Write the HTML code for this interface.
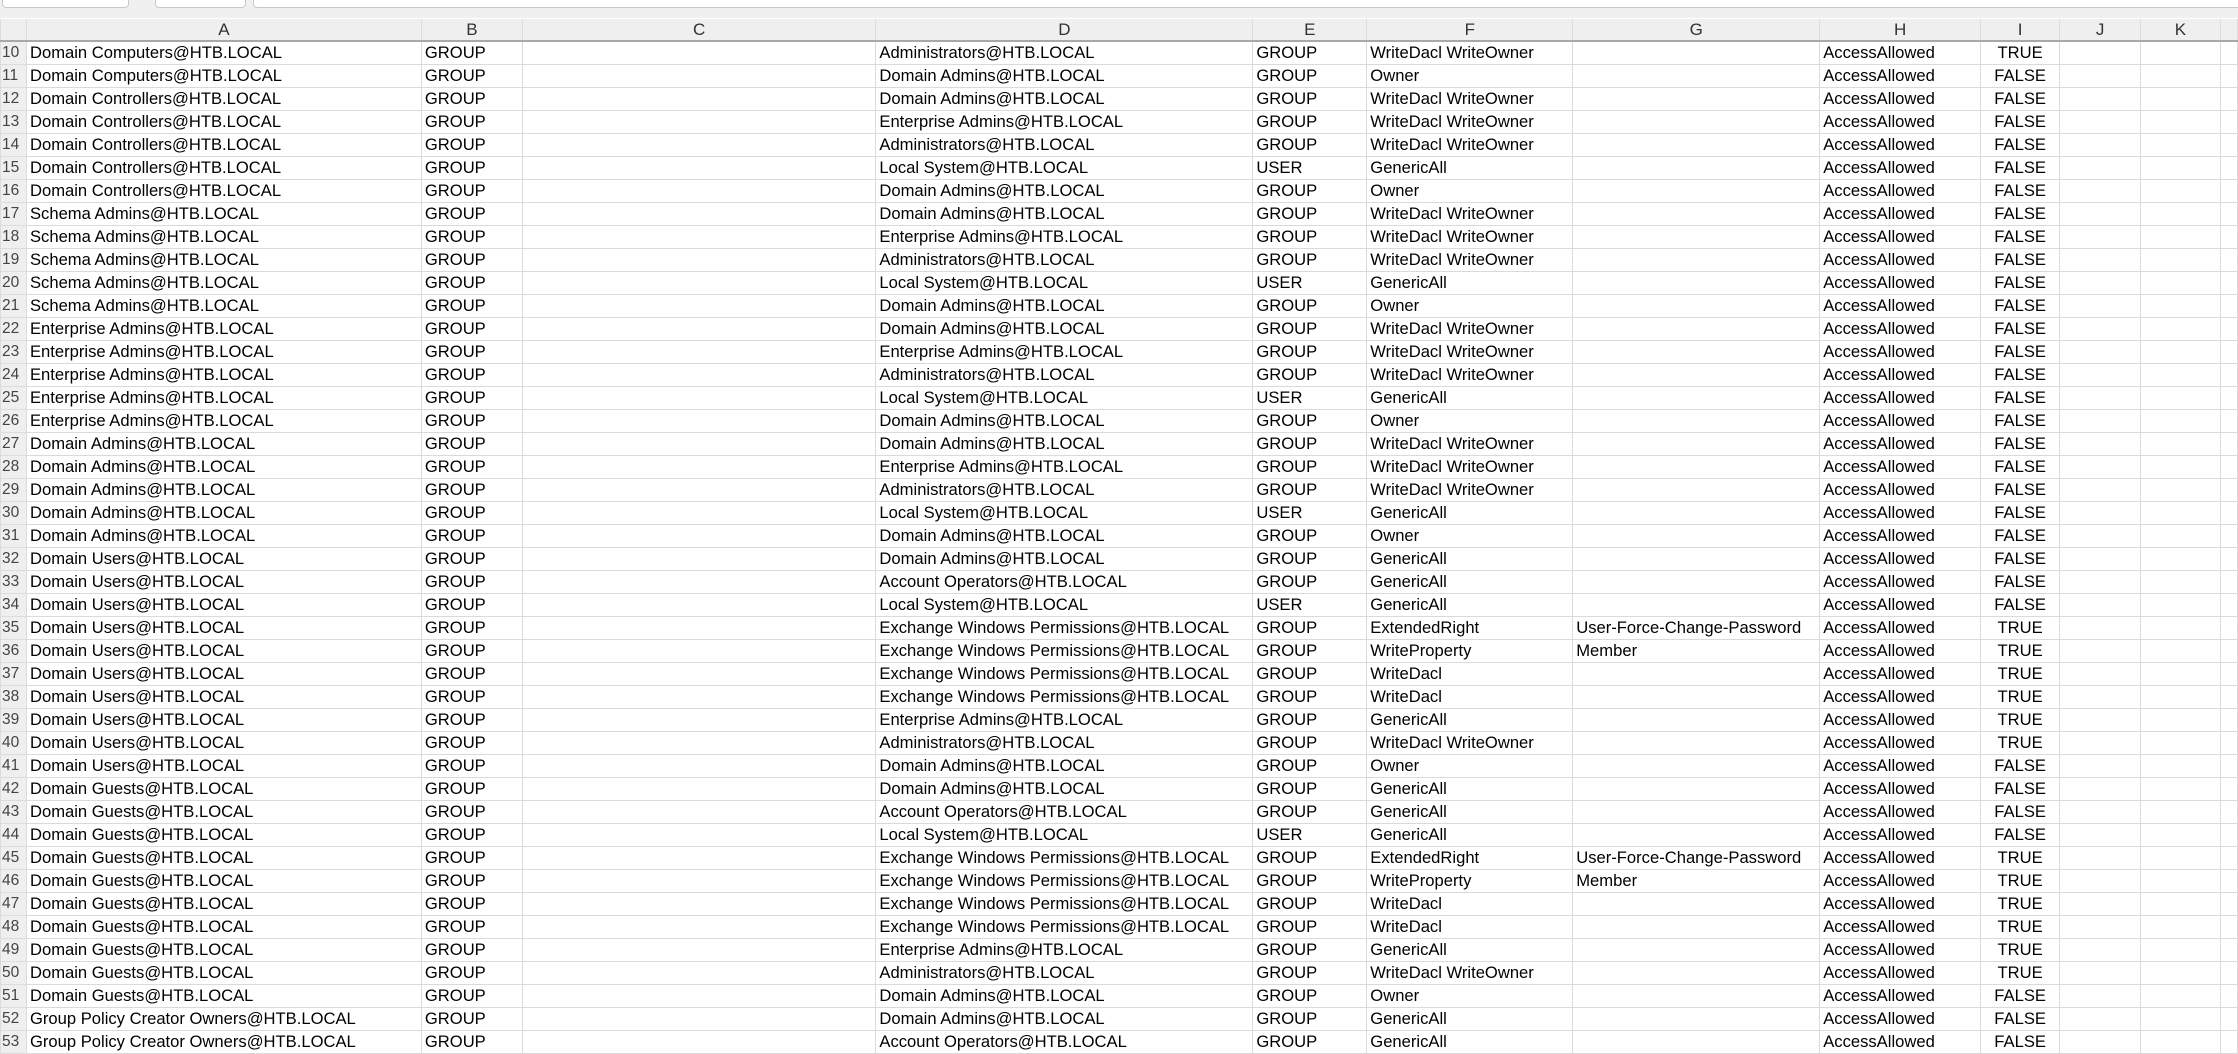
<!DOCTYPE html>
<html><head><meta charset="utf-8"><style>
*{margin:0;padding:0;box-sizing:border-box}
body{width:2238px;height:1049px;overflow:hidden;background:#fff;font-family:"Liberation Sans",sans-serif;color:#000}
#top{position:absolute;left:0;top:0;width:2238px;height:18px;background:#f0f0f0}
.box{position:absolute;top:-6px;height:14px;background:#fff;border:1px solid #c8c8c8;border-radius:4px}
table{position:absolute;left:0;top:19px;border-collapse:collapse;table-layout:fixed}
td{height:23px;border:1px solid #dadada;font-size:16.6px;white-space:nowrap;overflow:hidden;padding:0 3px;line-height:21px}
tr.h td{height:21px;background:#efefef;text-align:center;color:#333;border-color:#dcdcdc;border-bottom:2px solid #a8a8a8;border-top:none;font-size:17px}
td.n{background:#efefef;color:#444;padding:0 1px;text-align:left;font-size:15.5px;border-color:#dcdcdc}
td.c{text-align:center}
</style></head><body>
<div id="top"><div class="box" style="left:2px;width:127px"></div><div class="box" style="left:155px;width:91px"></div><div class="box" style="left:253px;width:1990px"></div></div>
<table>
<colgroup><col style="width:26px"><col style="width:395px"><col style="width:101px"><col style="width:354px"><col style="width:377px"><col style="width:114px"><col style="width:206px"><col style="width:247px"><col style="width:161px"><col style="width:79px"><col style="width:81px"><col style="width:80px"><col style="width:17px"></colgroup>
<tr class="h"><td class="n" style="border-bottom:2px solid #a8a8a8"></td><td>A</td><td>B</td><td>C</td><td>D</td><td>E</td><td>F</td><td>G</td><td>H</td><td>I</td><td>J</td><td>K</td><td></td></tr>
<tr><td class="n">10</td><td>Domain Computers@HTB.LOCAL</td><td>GROUP</td><td></td><td>Administrators@HTB.LOCAL</td><td>GROUP</td><td>WriteDacl WriteOwner</td><td></td><td>AccessAllowed</td><td class="c">TRUE</td><td></td><td></td><td></td></tr>
<tr><td class="n">11</td><td>Domain Computers@HTB.LOCAL</td><td>GROUP</td><td></td><td>Domain Admins@HTB.LOCAL</td><td>GROUP</td><td>Owner</td><td></td><td>AccessAllowed</td><td class="c">FALSE</td><td></td><td></td><td></td></tr>
<tr><td class="n">12</td><td>Domain Controllers@HTB.LOCAL</td><td>GROUP</td><td></td><td>Domain Admins@HTB.LOCAL</td><td>GROUP</td><td>WriteDacl WriteOwner</td><td></td><td>AccessAllowed</td><td class="c">FALSE</td><td></td><td></td><td></td></tr>
<tr><td class="n">13</td><td>Domain Controllers@HTB.LOCAL</td><td>GROUP</td><td></td><td>Enterprise Admins@HTB.LOCAL</td><td>GROUP</td><td>WriteDacl WriteOwner</td><td></td><td>AccessAllowed</td><td class="c">FALSE</td><td></td><td></td><td></td></tr>
<tr><td class="n">14</td><td>Domain Controllers@HTB.LOCAL</td><td>GROUP</td><td></td><td>Administrators@HTB.LOCAL</td><td>GROUP</td><td>WriteDacl WriteOwner</td><td></td><td>AccessAllowed</td><td class="c">FALSE</td><td></td><td></td><td></td></tr>
<tr><td class="n">15</td><td>Domain Controllers@HTB.LOCAL</td><td>GROUP</td><td></td><td>Local System@HTB.LOCAL</td><td>USER</td><td>GenericAll</td><td></td><td>AccessAllowed</td><td class="c">FALSE</td><td></td><td></td><td></td></tr>
<tr><td class="n">16</td><td>Domain Controllers@HTB.LOCAL</td><td>GROUP</td><td></td><td>Domain Admins@HTB.LOCAL</td><td>GROUP</td><td>Owner</td><td></td><td>AccessAllowed</td><td class="c">FALSE</td><td></td><td></td><td></td></tr>
<tr><td class="n">17</td><td>Schema Admins@HTB.LOCAL</td><td>GROUP</td><td></td><td>Domain Admins@HTB.LOCAL</td><td>GROUP</td><td>WriteDacl WriteOwner</td><td></td><td>AccessAllowed</td><td class="c">FALSE</td><td></td><td></td><td></td></tr>
<tr><td class="n">18</td><td>Schema Admins@HTB.LOCAL</td><td>GROUP</td><td></td><td>Enterprise Admins@HTB.LOCAL</td><td>GROUP</td><td>WriteDacl WriteOwner</td><td></td><td>AccessAllowed</td><td class="c">FALSE</td><td></td><td></td><td></td></tr>
<tr><td class="n">19</td><td>Schema Admins@HTB.LOCAL</td><td>GROUP</td><td></td><td>Administrators@HTB.LOCAL</td><td>GROUP</td><td>WriteDacl WriteOwner</td><td></td><td>AccessAllowed</td><td class="c">FALSE</td><td></td><td></td><td></td></tr>
<tr><td class="n">20</td><td>Schema Admins@HTB.LOCAL</td><td>GROUP</td><td></td><td>Local System@HTB.LOCAL</td><td>USER</td><td>GenericAll</td><td></td><td>AccessAllowed</td><td class="c">FALSE</td><td></td><td></td><td></td></tr>
<tr><td class="n">21</td><td>Schema Admins@HTB.LOCAL</td><td>GROUP</td><td></td><td>Domain Admins@HTB.LOCAL</td><td>GROUP</td><td>Owner</td><td></td><td>AccessAllowed</td><td class="c">FALSE</td><td></td><td></td><td></td></tr>
<tr><td class="n">22</td><td>Enterprise Admins@HTB.LOCAL</td><td>GROUP</td><td></td><td>Domain Admins@HTB.LOCAL</td><td>GROUP</td><td>WriteDacl WriteOwner</td><td></td><td>AccessAllowed</td><td class="c">FALSE</td><td></td><td></td><td></td></tr>
<tr><td class="n">23</td><td>Enterprise Admins@HTB.LOCAL</td><td>GROUP</td><td></td><td>Enterprise Admins@HTB.LOCAL</td><td>GROUP</td><td>WriteDacl WriteOwner</td><td></td><td>AccessAllowed</td><td class="c">FALSE</td><td></td><td></td><td></td></tr>
<tr><td class="n">24</td><td>Enterprise Admins@HTB.LOCAL</td><td>GROUP</td><td></td><td>Administrators@HTB.LOCAL</td><td>GROUP</td><td>WriteDacl WriteOwner</td><td></td><td>AccessAllowed</td><td class="c">FALSE</td><td></td><td></td><td></td></tr>
<tr><td class="n">25</td><td>Enterprise Admins@HTB.LOCAL</td><td>GROUP</td><td></td><td>Local System@HTB.LOCAL</td><td>USER</td><td>GenericAll</td><td></td><td>AccessAllowed</td><td class="c">FALSE</td><td></td><td></td><td></td></tr>
<tr><td class="n">26</td><td>Enterprise Admins@HTB.LOCAL</td><td>GROUP</td><td></td><td>Domain Admins@HTB.LOCAL</td><td>GROUP</td><td>Owner</td><td></td><td>AccessAllowed</td><td class="c">FALSE</td><td></td><td></td><td></td></tr>
<tr><td class="n">27</td><td>Domain Admins@HTB.LOCAL</td><td>GROUP</td><td></td><td>Domain Admins@HTB.LOCAL</td><td>GROUP</td><td>WriteDacl WriteOwner</td><td></td><td>AccessAllowed</td><td class="c">FALSE</td><td></td><td></td><td></td></tr>
<tr><td class="n">28</td><td>Domain Admins@HTB.LOCAL</td><td>GROUP</td><td></td><td>Enterprise Admins@HTB.LOCAL</td><td>GROUP</td><td>WriteDacl WriteOwner</td><td></td><td>AccessAllowed</td><td class="c">FALSE</td><td></td><td></td><td></td></tr>
<tr><td class="n">29</td><td>Domain Admins@HTB.LOCAL</td><td>GROUP</td><td></td><td>Administrators@HTB.LOCAL</td><td>GROUP</td><td>WriteDacl WriteOwner</td><td></td><td>AccessAllowed</td><td class="c">FALSE</td><td></td><td></td><td></td></tr>
<tr><td class="n">30</td><td>Domain Admins@HTB.LOCAL</td><td>GROUP</td><td></td><td>Local System@HTB.LOCAL</td><td>USER</td><td>GenericAll</td><td></td><td>AccessAllowed</td><td class="c">FALSE</td><td></td><td></td><td></td></tr>
<tr><td class="n">31</td><td>Domain Admins@HTB.LOCAL</td><td>GROUP</td><td></td><td>Domain Admins@HTB.LOCAL</td><td>GROUP</td><td>Owner</td><td></td><td>AccessAllowed</td><td class="c">FALSE</td><td></td><td></td><td></td></tr>
<tr><td class="n">32</td><td>Domain Users@HTB.LOCAL</td><td>GROUP</td><td></td><td>Domain Admins@HTB.LOCAL</td><td>GROUP</td><td>GenericAll</td><td></td><td>AccessAllowed</td><td class="c">FALSE</td><td></td><td></td><td></td></tr>
<tr><td class="n">33</td><td>Domain Users@HTB.LOCAL</td><td>GROUP</td><td></td><td>Account Operators@HTB.LOCAL</td><td>GROUP</td><td>GenericAll</td><td></td><td>AccessAllowed</td><td class="c">FALSE</td><td></td><td></td><td></td></tr>
<tr><td class="n">34</td><td>Domain Users@HTB.LOCAL</td><td>GROUP</td><td></td><td>Local System@HTB.LOCAL</td><td>USER</td><td>GenericAll</td><td></td><td>AccessAllowed</td><td class="c">FALSE</td><td></td><td></td><td></td></tr>
<tr><td class="n">35</td><td>Domain Users@HTB.LOCAL</td><td>GROUP</td><td></td><td>Exchange Windows Permissions@HTB.LOCAL</td><td>GROUP</td><td>ExtendedRight</td><td>User-Force-Change-Password</td><td>AccessAllowed</td><td class="c">TRUE</td><td></td><td></td><td></td></tr>
<tr><td class="n">36</td><td>Domain Users@HTB.LOCAL</td><td>GROUP</td><td></td><td>Exchange Windows Permissions@HTB.LOCAL</td><td>GROUP</td><td>WriteProperty</td><td>Member</td><td>AccessAllowed</td><td class="c">TRUE</td><td></td><td></td><td></td></tr>
<tr><td class="n">37</td><td>Domain Users@HTB.LOCAL</td><td>GROUP</td><td></td><td>Exchange Windows Permissions@HTB.LOCAL</td><td>GROUP</td><td>WriteDacl</td><td></td><td>AccessAllowed</td><td class="c">TRUE</td><td></td><td></td><td></td></tr>
<tr><td class="n">38</td><td>Domain Users@HTB.LOCAL</td><td>GROUP</td><td></td><td>Exchange Windows Permissions@HTB.LOCAL</td><td>GROUP</td><td>WriteDacl</td><td></td><td>AccessAllowed</td><td class="c">TRUE</td><td></td><td></td><td></td></tr>
<tr><td class="n">39</td><td>Domain Users@HTB.LOCAL</td><td>GROUP</td><td></td><td>Enterprise Admins@HTB.LOCAL</td><td>GROUP</td><td>GenericAll</td><td></td><td>AccessAllowed</td><td class="c">TRUE</td><td></td><td></td><td></td></tr>
<tr><td class="n">40</td><td>Domain Users@HTB.LOCAL</td><td>GROUP</td><td></td><td>Administrators@HTB.LOCAL</td><td>GROUP</td><td>WriteDacl WriteOwner</td><td></td><td>AccessAllowed</td><td class="c">TRUE</td><td></td><td></td><td></td></tr>
<tr><td class="n">41</td><td>Domain Users@HTB.LOCAL</td><td>GROUP</td><td></td><td>Domain Admins@HTB.LOCAL</td><td>GROUP</td><td>Owner</td><td></td><td>AccessAllowed</td><td class="c">FALSE</td><td></td><td></td><td></td></tr>
<tr><td class="n">42</td><td>Domain Guests@HTB.LOCAL</td><td>GROUP</td><td></td><td>Domain Admins@HTB.LOCAL</td><td>GROUP</td><td>GenericAll</td><td></td><td>AccessAllowed</td><td class="c">FALSE</td><td></td><td></td><td></td></tr>
<tr><td class="n">43</td><td>Domain Guests@HTB.LOCAL</td><td>GROUP</td><td></td><td>Account Operators@HTB.LOCAL</td><td>GROUP</td><td>GenericAll</td><td></td><td>AccessAllowed</td><td class="c">FALSE</td><td></td><td></td><td></td></tr>
<tr><td class="n">44</td><td>Domain Guests@HTB.LOCAL</td><td>GROUP</td><td></td><td>Local System@HTB.LOCAL</td><td>USER</td><td>GenericAll</td><td></td><td>AccessAllowed</td><td class="c">FALSE</td><td></td><td></td><td></td></tr>
<tr><td class="n">45</td><td>Domain Guests@HTB.LOCAL</td><td>GROUP</td><td></td><td>Exchange Windows Permissions@HTB.LOCAL</td><td>GROUP</td><td>ExtendedRight</td><td>User-Force-Change-Password</td><td>AccessAllowed</td><td class="c">TRUE</td><td></td><td></td><td></td></tr>
<tr><td class="n">46</td><td>Domain Guests@HTB.LOCAL</td><td>GROUP</td><td></td><td>Exchange Windows Permissions@HTB.LOCAL</td><td>GROUP</td><td>WriteProperty</td><td>Member</td><td>AccessAllowed</td><td class="c">TRUE</td><td></td><td></td><td></td></tr>
<tr><td class="n">47</td><td>Domain Guests@HTB.LOCAL</td><td>GROUP</td><td></td><td>Exchange Windows Permissions@HTB.LOCAL</td><td>GROUP</td><td>WriteDacl</td><td></td><td>AccessAllowed</td><td class="c">TRUE</td><td></td><td></td><td></td></tr>
<tr><td class="n">48</td><td>Domain Guests@HTB.LOCAL</td><td>GROUP</td><td></td><td>Exchange Windows Permissions@HTB.LOCAL</td><td>GROUP</td><td>WriteDacl</td><td></td><td>AccessAllowed</td><td class="c">TRUE</td><td></td><td></td><td></td></tr>
<tr><td class="n">49</td><td>Domain Guests@HTB.LOCAL</td><td>GROUP</td><td></td><td>Enterprise Admins@HTB.LOCAL</td><td>GROUP</td><td>GenericAll</td><td></td><td>AccessAllowed</td><td class="c">TRUE</td><td></td><td></td><td></td></tr>
<tr><td class="n">50</td><td>Domain Guests@HTB.LOCAL</td><td>GROUP</td><td></td><td>Administrators@HTB.LOCAL</td><td>GROUP</td><td>WriteDacl WriteOwner</td><td></td><td>AccessAllowed</td><td class="c">TRUE</td><td></td><td></td><td></td></tr>
<tr><td class="n">51</td><td>Domain Guests@HTB.LOCAL</td><td>GROUP</td><td></td><td>Domain Admins@HTB.LOCAL</td><td>GROUP</td><td>Owner</td><td></td><td>AccessAllowed</td><td class="c">FALSE</td><td></td><td></td><td></td></tr>
<tr><td class="n">52</td><td>Group Policy Creator Owners@HTB.LOCAL</td><td>GROUP</td><td></td><td>Domain Admins@HTB.LOCAL</td><td>GROUP</td><td>GenericAll</td><td></td><td>AccessAllowed</td><td class="c">FALSE</td><td></td><td></td><td></td></tr>
<tr><td class="n">53</td><td>Group Policy Creator Owners@HTB.LOCAL</td><td>GROUP</td><td></td><td>Account Operators@HTB.LOCAL</td><td>GROUP</td><td>GenericAll</td><td></td><td>AccessAllowed</td><td class="c">FALSE</td><td></td><td></td><td></td></tr>
</table>
</body></html>
